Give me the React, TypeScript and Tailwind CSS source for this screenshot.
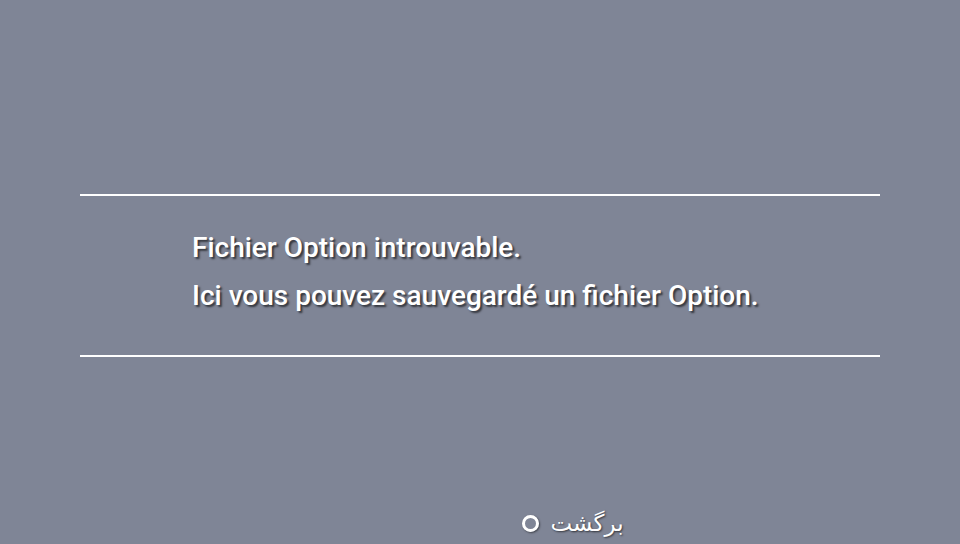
export default function App() {
  return (
    <div className="w-[960px] h-[544px] bg-[#7f8596] flex flex-col font-['Roboto',sans-serif] text-white">
      <div className="h-[194px]" />
      <div className="mx-[80px] h-[2px] bg-white" />
      <div className="h-[159px] flex flex-col justify-center pl-[192px] pb-[8px]">
        <p className="text-[28px] leading-[48px] font-medium whitespace-nowrap [text-shadow:2px_2px_2px_rgba(0,0,0,0.6)]">
          Fichier Option introuvable.
        </p>
        <p className="text-[28px] leading-[48px] font-medium whitespace-nowrap [text-shadow:2px_2px_2px_rgba(0,0,0,0.6)]">
          Ici vous pouvez sauvegardé un fichier Option.
        </p>
      </div>
      <div className="mx-[80px] h-[2px] bg-white" />
      <div className="flex-1 flex items-end justify-center pb-[6px] pl-[186px]">
        <div className="flex items-center gap-[11px] [text-shadow:1px_1px_2px_rgba(0,0,0,0.6)]">
          <span className="w-[17px] h-[17px] rounded-full border-[3px] border-white shadow-[1px_1px_2px_rgba(0,0,0,0.5)]" />
          <span dir="rtl" className="text-[23px] leading-[30px] font-['DejaVu_Sans',sans-serif]">برگشت</span>
        </div>
      </div>
    </div>
  );
}
